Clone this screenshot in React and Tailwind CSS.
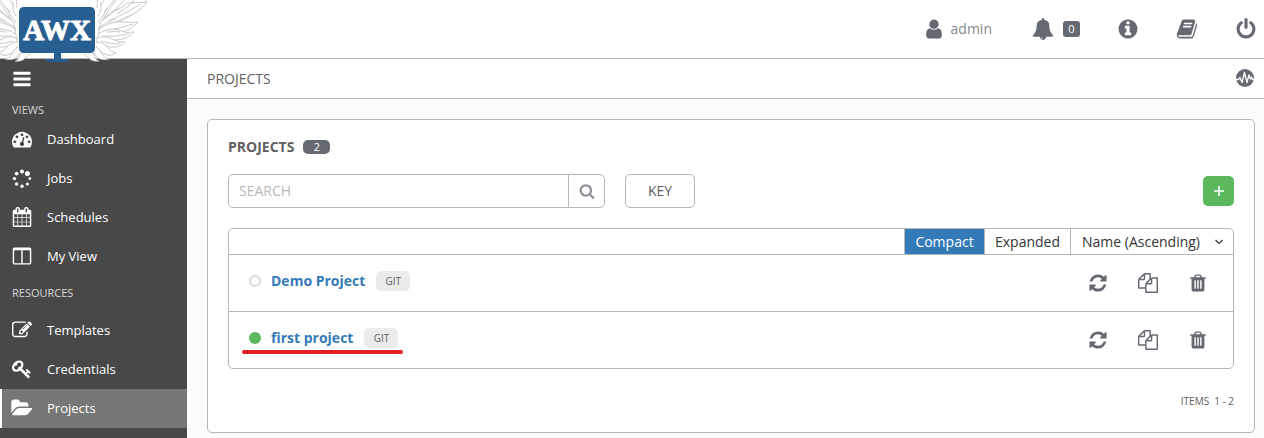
import { useState } from 'react';

const icons = {
  bars: 'M1664 1344v128q0 26-19 45t-45 19h-1408q-26 0-45-19t-19-45v-128q0-26 19-45t45-19h1408q26 0 45 19t19 45zm0-512v128q0 26-19 45t-45 19h-1408q-26 0-45-19t-19-45v-128q0-26 19-45t45-19h1408q26 0 45 19t19 45zm0-512v128q0 26-19 45t-45 19h-1408q-26 0-45-19t-19-45v-128q0-26 19-45t45-19h1408q26 0 45 19t19 45z',
  user: 'M1536 1399q0 109-62.5 187t-150.5 78h-854q-88 0-150.5-78t-62.5-187q0-85 8.5-160.5t31.5-152 58.5-131 94-89 134.5-34.5q131 128 313 128t313-128q76 0 134.5 34.5t94 89 58.5 131 31.5 152 8.5 160.5zm-256-887q0 159-112.5 271.5t-271.5 112.5-271.5-112.5-112.5-271.5 112.5-271.5 271.5-112.5 271.5 112.5 112.5 271.5z',
  refresh:
    'M1639 1056q0 5-1 7-64 268-268 434.5t-478 166.5q-146 0-282.5-55t-243.5-157l-129 129q-19 19-45 19t-45-19-19-45v-448q0-26 19-45t45-19h448q26 0 45 19t19 45-19 45l-137 137q71 66 161 102t187 36q134 0 250-65t186-179q11-17 53-117 8-23 30-23h192q13 0 22.5 9.5t9.5 22.5zm25-800v448q0 26-19 45t-45 19h-448q-26 0-45-19t-19-45 19-45l138-138q-148-137-349-137-134 0-250 65t-186 179q-11 17-53 117-8 23-30 23h-199q-13 0-22.5-9.5t-9.5-22.5v-7q65-268 270-434.5t480-166.5q146 0 284 55.5t245 156.5l130-129q19-19 45-19t45 19 19 45z',
  search:
    'M1216 832q0-185-131.5-316.5t-316.5-131.5-316.5 131.5-131.5 316.5 131.5 316.5 316.5 131.5 316.5-131.5 131.5-316.5zm512 832q0 52-38 90t-90 38q-54 0-90-38l-343-342q-179 124-399 124-143 0-273.5-55.5t-225-150-150-225-55.5-273.5 55.5-273.5 150-225 225-150 273.5-55.5 273.5 55.5 225 150 150 225 55.5 273.5q0 220-124 399l343 343q37 37 37 90z',
  info: 'M1152 1376v-160q0-14-9-23t-23-9h-96v-512q0-14-9-23t-23-9h-320q-14 0-23 9t-9 23v160q0 14 9 23t23 9h96v320h-96q-14 0-23 9t-9 23v160q0 14 9 23t23 9h448q14 0 23-9t9-23zm-128-896v-160q0-14-9-23t-23-9h-192q-14 0-23 9t-9 23v160q0 14 9 23t23 9h192q14 0 23-9t9-23zm640 416q0 209-103 385.5t-279.5 279.5-385.5 103-385.5-103-279.5-279.5-103-385.5 103-385.5 279.5-279.5 385.5-103 385.5 103 279.5 279.5 103 385.5z',
  folder:
    'M1815 952q0 31-31 66l-336 396q-43 51-120.5 86.5t-143.5 35.5h-1088q-34 0-60.5-13t-26.5-43q0-31 31-66l336-396q43-51 120.5-86.5t143.5-35.5h1088q34 0 60.5 13t26.5 43zm-343-344v160h-832q-94 0-197 47.5t-164 119.5l-337 396-5 6q0-4-.5-12.5t-.5-12.5v-960q0-92 66-158t158-66h320q92 0 158 66t66 158v32h544q92 0 158 66t66 158z',
  power:
    'M1664 896q0 156-61 298t-164 245-245 164-298 61-298-61-245-164-164-245-61-298q0-182 80.5-343t226.5-270q43-32 95.5-25t83.5 50q32 42 24.5 94.5t-49.5 84.5q-98 74-151.5 181t-53.5 228q0 104 40.5 198.5t109.5 163.5 163.5 109.5 198.5 40.5 198.5-40.5 163.5-109.5 109.5-163.5 40.5-198.5q0-121-53.5-228t-151.5-181q-42-32-49.5-84.5t24.5-94.5q31-43 84-50t95 25q146 109 226.5 270t80.5 343zm-640-768v640q0 52-38 90t-90 38-90-38-38-90v-640q0-52 38-90t90-38 90 38 38 90z',
  book: 'M1703 478q40 57 18 129l-275 906q-19 64-76.5 107.5t-122.5 43.5h-923q-77 0-148.5-53.5t-99.5-131.5q-24-67-2-127 0-4 3-27t4-37q1-8-3-21.5t-3-19.5q2-11 8-21t16.5-23.5 16.5-23.5q23-38 45-91.5t30-91.5q3-10 .5-30t-.5-28q3-11 17-28t17-23q21-36 42-92t25-90q1-9-2.5-32t.5-28q4-13 22-30.5t22-22.5q19-26 42.5-84.5t27.5-96.5q1-8-3-25.5t-2-26.5q2-8 9-18t18-23 17-21q8-12 16.5-30.5t15-35 16-36 19.5-32 26.5-23.5 36-11.5 47.5 5.5l-1 3q38-9 51-9h761q74 0 114 56t18 130l-274 906q-36 119-71.5 153.5t-128.5 34.5h-869q-27 0-38 15-11 16-1 43 24 70 144 70h923q29 0 56-15.5t35-41.5l300-987q7-22 5-57 38 15 59 43zm-1064 2q-4 13 2 22.5t20 9.5h608q13 0 25.5-9.5t16.5-22.5l21-64q4-13-2-22.5t-20-9.5h-608q-13 0-25.5 9.5t-16.5 22.5zm-83 256q-4 13 2 22.5t20 9.5h608q13 0 25.5-9.5t16.5-22.5l21-64q4-13-2-22.5t-20-9.5h-608q-13 0-25.5 9.5t-16.5 22.5z',
  trash:
    'M704 1376v-704q0-14-9-23t-23-9h-64q-14 0-23 9t-9 23v704q0 14 9 23t23 9h64q14 0 23-9t9-23zm256 0v-704q0-14-9-23t-23-9h-64q-14 0-23 9t-9 23v704q0 14 9 23t23 9h64q14 0 23-9t9-23zm256 0v-704q0-14-9-23t-23-9h-64q-14 0-23 9t-9 23v704q0 14 9 23t23 9h64q14 0 23-9t9-23zm-544-992h448l-48-117q-7-9-17-11h-317q-10 2-17 11zm928 32v64q0 14-9 23t-23 9h-96v948q0 83-47 143.5t-113 60.5h-832q-66 0-113-58.5t-47-141.5v-952h-96q-14 0-23-9t-9-23v-64q0-14 9-23t23-9h309l70-167q15-37 54-63t79-26h320q40 0 79 26t54 63l70 167h309q14 0 23 9t9 23z',
  bell: 'M912 1696q0-16-16-16-59 0-101.5-42.5t-42.5-101.5q0-16-16-16t-16 16q0 73 51.5 124.5t124.5 51.5q16 0 16-16zm816-288q0 52-38 90t-90 38h-448q0 106-75 181t-181 75-181-75-75-181h-448q-52 0-90-38t-38-90q50-42 91-88t85-119.5 74.5-158.5 50-206 19.5-260q0-152 117-282.5t307-158.5q-8-19-8-39 0-40 28-68t68-28 68 28 28 68q0 20-8 39 190 28 307 158.5t117 282.5q0 139 19.5 260t50 206 74.5 158.5 85 119.5 91 88z',
  columns:
    'M224 1536h608v-1152h-640v1120q0 13 9.5 22.5t22.5 9.5zm1376-32v-1120h-640v1152h608q13 0 22.5-9.5t9.5-22.5zm128-1216v1216q0 66-47 113t-113 47h-1344q-66 0-113-47t-47-113v-1216q0-66 47-113t113-47h1344q66 0 113 47t47 113z',
  calendar:
    'M192 1664h288v-288h-288v288zm352 0h320v-288h-320v288zm-352-352h288v-320h-288v320zm352 0h320v-320h-320v320zm-352-384h288v-288h-288v288zm736 736h320v-288h-320v288zm-384-736h320v-288h-320v288zm768 736h288v-288h-288v288zm-384-352h320v-320h-320v320zm-352-864v-288q0-13-9.5-22.5t-22.5-9.5h-64q-13 0-22.5 9.5t-9.5 22.5v288q0 13 9.5 22.5t22.5 9.5h64q13 0 22.5-9.5t9.5-22.5zm736 864h288v-320h-288v320zm-384-384h320v-288h-320v288zm384 0h288v-288h-288v288zm32-480v-288q0-13-9.5-22.5t-22.5-9.5h-64q-13 0-22.5 9.5t-9.5 22.5v288q0 13 9.5 22.5t22.5 9.5h64q13 0 22.5-9.5t9.5-22.5zm384-64v1280q0 52-38 90t-90 38h-1408q-52 0-90-38t-38-90v-1280q0-52 38-90t90-38h128v-96q0-66 47-113t113-47h64q66 0 113 47t47 113v96h384v-96q0-66 47-113t113-47h64q66 0 113 47t47 113v96h128q52 0 90 38t38 90z',
  edit: 'M888 1184l116-116-152-152-116 116v56h96v96h56zm440-720q-16-16-33 1l-350 350q-17 17-1 33t33-1l350-350q17-17 1-33zm80 594v190q0 119-84.5 203.5t-203.5 84.5h-832q-119 0-203.5-84.5t-84.5-203.5v-832q0-119 84.5-203.5t203.5-84.5h832q63 0 117 25 15 7 18 23 3 17-9 29l-49 49q-14 14-32 8-23-6-45-6h-832q-66 0-113 47t-47 113v832q0 66 47 113t113 47h832q66 0 113-47t47-113v-126q0-13 9-22l64-64q15-15 35-7t20 29zm-96-738l288 288-672 672h-288v-288zm444 132l-92 92-288-288 92-92q28-28 68-28t68 28l152 152q28 28 28 68t-28 68z',
  key: 'M832 512q0-80-56-136t-136-56-136 56-56 136q0 42 19 83-41-19-83-19-80 0-136 56t-56 136 56 136 136 56 136-56 56-136q0-42-19-83 41 19 83 19 80 0 136-56t56-136zm851 704q0 17-49 66t-66 49q-9 0-28.5-16t-36.5-33-38.5-40-24.5-26l-96 96 220 220q28 28 28 68 0 42-39 81t-81 39q-40 0-68-28l-671-671q-176 131-365 131-163 0-265.5-102.5t-102.5-265.5q0-160 95-313t248-248 313-95q163 0 265.5 102.5t102.5 265.5q0 189-131 365l355 355 96-96q-3-3-26-24.5t-40-38.5-33-36.5-16-28.5q0-17 49-66t66-49q13 0 23 10 6 6 46 44.5t82 79.5 86.5 86 73 78 28.5 41z',
  copy: 'M1696 384q40 0 68 28t28 68v1216q0 40-28 68t-68 28h-960q-40 0-68-28t-28-68v-288h-544q-40 0-68-28t-28-68v-672q0-40 20-88t48-76l408-408q28-28 76-48t88-20h416q40 0 68 28t28 68v328q68-40 128-40h416zm-544 213l-299 299h299v-299zm-640-384l-299 299h299v-299zm196 647l316-316v-416h-384v416q0 40-28 68t-68 28h-416v640h512v-256q0-40 20-88t48-76zm956 804v-1152h-384v416q0 40-28 68t-68 28h-416v640h896z',
  dashboard:
    'M384 1152q0-53-37.5-90.5t-90.5-37.5-90.5 37.5-37.5 90.5 37.5 90.5 90.5 37.5 90.5-37.5 37.5-90.5zm192-448q0-53-37.5-90.5t-90.5-37.5-90.5 37.5-37.5 90.5 37.5 90.5 90.5 37.5 90.5-37.5 37.5-90.5zm428 481l101-382q6-26-7.5-48.5t-38.5-29.5-48 6.5-30 39.5l-101 382q-60 5-107 43.5t-63 98.5q-20 77 20 146t117 89 146-20 89-117q16-60-6-117t-72-91zm660-33q0-53-37.5-90.5t-90.5-37.5-90.5 37.5-37.5 90.5 37.5 90.5 90.5 37.5 90.5-37.5 37.5-90.5zm-640-640q0-53-37.5-90.5t-90.5-37.5-90.5 37.5-37.5 90.5 37.5 90.5 90.5 37.5 90.5-37.5 37.5-90.5zm448 192q0-53-37.5-90.5t-90.5-37.5-90.5 37.5-37.5 90.5 37.5 90.5 90.5 37.5 90.5-37.5 37.5-90.5zm320 448q0 261-141 483-19 29-54 29h-1402q-35 0-54-29-141-221-141-483 0-182 71-348t191-286 286-191 348-71 348 71 286 191 191 286 71 348z',
};

function Icon({ name, className }) {
  return (
    <svg
      viewBox="0 0 1792 1792"
      fill="currentColor"
      overflow="visible"
      aria-hidden="true"
      className={className}
    >
      <path d={icons[name]} />
    </svg>
  );
}

function JobsIcon({ className }) {
  return (
    <svg viewBox="0 0 20 20" fill="currentColor" className={className} aria-hidden="true">
      <circle cx="10" cy="2.4" r="2" />
      <circle cx="15.4" cy="4.6" r="2.5" />
      <circle cx="17.8" cy="9.600" r="1.4" />
      <circle cx="15.4" cy="15" r="1.6" />
      <circle cx="10" cy="17.2" r="1.7" />
      <circle cx="4.6" cy="15" r="1.7" />
      <circle cx="2.4" cy="9.600" r="1.7" />
      <circle cx="4.6" cy="4.6" r="1.9" />
    </svg>
  );
}

function ActivityIcon() {
  return (
    <svg viewBox="0 0 20 20" fill="none" className="size-5" aria-hidden="true">
      <circle cx="10" cy="9" r="9" fill="#646972" />
      <path
        d="M1 10.500h2.500l1.500-2 2 5 2.500-10 2.500 10 2-7.500 1.500 4 1-2 1 2.500h2"
        stroke="#fff"
        strokeWidth="1.3"
        strokeLinejoin="round"
      />
    </svg>
  );
}

function Wing() {
  return (
    <g fill="#fff" stroke="#bdbdbd" strokeWidth="0.8" strokeLinejoin="round">
      <path d="M98 30Q108 6 126-10L152-10Q146 4 136 12Q116 26 98 30z" />
      <path d="M100 6Q105 0 107-6M104 12Q112 4 117-5M108 16Q120 6 128-4M112 16Q128 8 140-6" />
      <path d="M100 22Q108 18 114 10Q122 9 127 3Q136 3 147 2Q139 13 126 17Q113 24 100 28z" />
      <path d="M108 21Q123 15 141 4M104 18Q111 13 118 9M117 14Q126 9 134 1" />
      <path d="M99 29Q110 21 122 22Q130 23 138 22Q130 31 118 33Q108 34 99 34z" />
      <path d="M103 31Q118 29 133 24M101 26Q108 22 116 19" />
      <path d="M98 34Q109 27 119 30Q126 34 134 32Q128 40 114 40Q106 40 98 38z" />
      <path d="M102 36Q115 37 129 34M107 32Q114 31 120 32" />
      <path d="M97 38Q107 35 114 40Q120 43 125 42Q120 48 110 47Q102 45 97 42z" />
      <path d="M101 41Q110 44 120 44" />
      <path d="M96 42Q104 42 108 48Q111 52 116 53Q110 57 104 54Q98 50 95 45z" />
      <path d="M93 46Q100 48 102 54Q104 58 109 59Q101 61 97 57Q93 52 91 48z" />
      <path d="M88 50Q94 52 95 58Q96 60 99 61Q92 62 89 58Q85 54 82 53z" />
      <path d="M97 8Q98 2 97-4M98 16Q102 11 101 2M98 22Q105 15 107 8" fill="none" />
    </g>
  );
}

function Logo() {
  return (
    <svg viewBox="0 0 150 63" className="h-[63px] w-[150px]" role="img" aria-label="AWX">
      <Wing />
      <g transform="matrix(-1 0 0 1 114 0)">
        <Wing />
      </g>
      <rect x="18" y="6" width="78" height="48" rx="6" fill="#fff" />
      <path
        d="M24 7H90Q95 7 95 12V48Q95 53 90 53H61V59H66Q68 59 68 62H46Q46 59 48 59H54V53H24Q19 53 19 48V12Q19 7 24 7z"
        fill="#285f93"
      />
      <text
        x="57"
        y="40"
        textAnchor="middle"
        fill="#fff"
        stroke="#fff"
        strokeWidth="1"
        fontSize="29"
        fontWeight="700"
        fontFamily="'Liberation Serif', serif"
      >
        AWX
      </text>
    </svg>
  );
}

const views = [
  { label: 'Dashboard', icon: 'dashboard' },
  { label: 'Jobs', icon: 'jobs' },
  { label: 'Schedules', icon: 'calendar' },
  { label: 'My View', icon: 'columns' },
];

const resources = [
  { label: 'Templates', icon: 'edit' },
  { label: 'Credentials', icon: 'key' },
  { label: 'Projects', icon: 'folder', active: true },
];

const projects = [
  { name: 'Demo Project', type: 'GIT', synced: false },
  { name: 'first project', type: 'GIT', synced: true, marked: true },
];

function NavItem({ label, icon, active }) {
  return (
    <li>
      <a
        href="#"
        aria-current={active ? 'page' : undefined}
        className={
          'flex h-[39px] items-center gap-[15px] border-l-2 pl-[10px] text-[13px] text-white hover:bg-[#777] ' +
          (active ? 'border-white bg-[#777]' : 'border-transparent')
        }
      >
        {icon === 'jobs' ? (
          <JobsIcon className="size-5" />
        ) : (
          <Icon name={icon} className="mb-[2px] size-5" />
        )}
        {label}
      </a>
    </li>
  );
}

function Header() {
  return (
    <header className="flex h-[59px] items-center justify-between border-b border-[#b7b7b7] bg-white text-[#646972]">
      <a href="#" className="relative z-10 h-[59px]">
        <Logo />
      </a>
      <div className="flex items-center pr-[7px]">
        <a href="#" className="flex items-center gap-[6px] text-sm text-[#848992]">
          <Icon name="user" className="size-[22px] text-[#646972]" />
          admin
        </a>
        <a href="#" aria-label="Notifications" className="ml-10 flex items-center gap-[9px]">
          <Icon name="bell" className="size-[22px]" />
          <span className="flex h-4 w-[17px] items-center justify-center rounded-[3px] bg-[#646972] text-[11px] text-white">
            0
          </span>
        </a>
        <a href="#" aria-label="About" className="ml-[37px]">
          <Icon name="info" className="size-[22px]" />
        </a>
        <a href="#" aria-label="Documentation" className="ml-[37px]">
          <Icon name="book" className="size-[22px]" />
        </a>
        <button type="button" aria-label="Log out" className="ml-[37px]">
          <Icon name="power" className="size-[22px]" />
        </button>
      </div>
    </header>
  );
}

function Sidebar() {
  return (
    <nav className="w-[187px] shrink-0 bg-[#484848]">
      <button
        type="button"
        aria-label="Toggle menu"
        className="flex h-[39px] w-full items-center pl-3 text-white"
      >
        <Icon name="bars" className="size-5" />
      </button>
      <h2 className="flex h-[22px] items-center pt-[2px] pl-3 text-[11px] text-[#d7d7d7]">
        VIEWS
      </h2>
      <ul>
        {views.map((item) => (
          <NavItem key={item.label} {...item} />
        ))}
      </ul>
      <h2 className="flex h-[35px] items-center pl-3 text-[11px] text-[#d7d7d7]">
        RESOURCES
      </h2>
      <ul>
        {resources.map((item) => (
          <NavItem key={item.label} {...item} />
        ))}
      </ul>
    </nav>
  );
}

function ProjectRow({ name, type, synced, marked }) {
  return (
    <li className="flex h-[57px] items-center justify-between border-t border-[#b7b7b7] px-5">
      <div className="relative mb-1 flex items-center">
        <span
          className={
            'mr-[10px] size-3 rounded-full ' +
            (synced ? 'bg-[#5cb85c]' : 'border-2 border-[#d7d7d7]')
          }
        />
        <a href="#" className="text-sm font-bold text-[#337ab7]">
          {name}
        </a>
        <span className="ml-[11px] flex h-5 w-[34px] items-center justify-center rounded-[5px] bg-[#ebebeb] text-[10px] text-[#606060]">
          {type}
        </span>
        {marked && (
          <span className="absolute -right-[5px] -bottom-[6px] -left-[7px] h-1 rounded-full bg-[#e01f25]" />
        )}
      </div>
      <div className="flex items-center gap-[30px] pr-[5px] text-[#646972]">
        <button type="button" aria-label={`Sync ${name}`}>
          <Icon name="refresh" className="size-5" />
        </button>
        <button type="button" aria-label={`Copy ${name}`}>
          <Icon name="copy" className="size-5" />
        </button>
        <button type="button" aria-label={`Delete ${name}`}>
          <Icon name="trash" className="size-5" />
        </button>
      </div>
    </li>
  );
}

export default function App() {
  const [compact, setCompact] = useState(true);

  return (
    <div className="flex min-h-screen flex-col bg-[#fcfcfc] font-['Open_Sans',sans-serif] text-[#606060]">
      <Header />
      <div className="flex flex-1">
        <Sidebar />
        <main className="min-w-0 flex-1">
          <div className="flex h-10 items-center justify-between border-b border-[#b7b7b7] bg-white pr-[9px] pl-5">
            <h1 className="text-sm">PROJECTS</h1>
            <button type="button" aria-label="Activity stream">
              <ActivityIcon />
            </button>
          </div>
          <section className="mt-5 mr-[9px] mb-[5px] ml-5 rounded-[5px] border border-[#b7b7b7] bg-white px-5 pt-[17px] pb-[23px]">
            <div className="flex h-5 items-center gap-[9px]">
              <h2 className="text-sm font-bold">PROJECTS</h2>
              <span className="flex h-[14px] w-[27px] items-center justify-center rounded-[5px] bg-[#646972] text-[11px] text-white">
                2
              </span>
            </div>
            <div className="mt-[17px] flex items-center">
              <form
                className="flex h-[34px] w-[377px] rounded-[5px] border border-[#b7b7b7]"
                onSubmit={(e) => e.preventDefault()}
              >
                <input
                  type="text"
                  aria-label="Search"
                  placeholder="SEARCH"
                  className="min-w-0 flex-1 px-[10px] text-sm outline-none placeholder:text-[#b7b7b7]"
                />
                <button
                  type="submit"
                  aria-label="Run search"
                  className="flex w-9 items-center justify-center border-l border-[#b7b7b7] text-[#8f9399]"
                >
                  <Icon name="search" className="size-4" />
                </button>
              </form>
              <button
                type="button"
                className="ml-5 h-[34px] w-[70px] rounded-[5px] border border-[#b7b7b7] text-sm"
              >
                KEY
              </button>
              <button
                type="button"
                aria-label="Add project"
                className="ml-auto flex h-[30px] w-[31px] items-center justify-center rounded-[5px] bg-[#5cb85c] text-white"
              >
                <svg
                  viewBox="0 0 12 12"
                  className="size-3"
                  stroke="currentColor"
                  strokeWidth="1.6"
                  aria-hidden="true"
                >
                  <path d="M6 1v10M1 6h10" />
                </svg>
              </button>
            </div>
            <div className="mt-5 overflow-hidden rounded-[5px] border border-[#b7b7b7]">
              <div className="flex h-[25px] justify-end text-sm text-[#333]">
                <button
                  type="button"
                  onClick={() => setCompact(true)}
                  className={
                    'w-20 border-l border-[#b7b7b7] ' + (compact ? 'bg-[#337ab7] text-white' : '')
                  }
                >
                  Compact
                </button>
                <button
                  type="button"
                  onClick={() => setCompact(false)}
                  className={
                    'w-[87px] border-x border-[#b7b7b7] ' +
                    (compact ? '' : 'bg-[#337ab7] text-white')
                  }
                >
                  Expanded
                </button>
                <div className="relative flex w-[162px]">
                  <select
                    aria-label="Sort by"
                    className="w-full appearance-none bg-transparent pr-7 pl-[11px] outline-none"
                  >
                    <option>Name (Ascending)</option>
                    <option>Name (Descending)</option>
                  </select>
                  <svg
                    viewBox="0 0 10 10"
                    fill="none"
                    stroke="currentColor"
                    strokeWidth="1.2"
                    aria-hidden="true"
                    className="pointer-events-none absolute top-2 right-[9px] size-[10px]"
                  >
                    <path d="M1.500 3l3.500 3.500 3.500-3.500" />
                  </svg>
                </div>
              </div>
              <ul>
                {projects.map((project) => (
                  <ProjectRow key={project.name} {...project} />
                ))}
              </ul>
            </div>
            <p className="mt-6 flex justify-end gap-[5px] text-[10px] leading-4">
              <span>ITEMS</span>
              <span>1 - 2</span>
            </p>
          </section>
        </main>
      </div>
    </div>
  );
}
